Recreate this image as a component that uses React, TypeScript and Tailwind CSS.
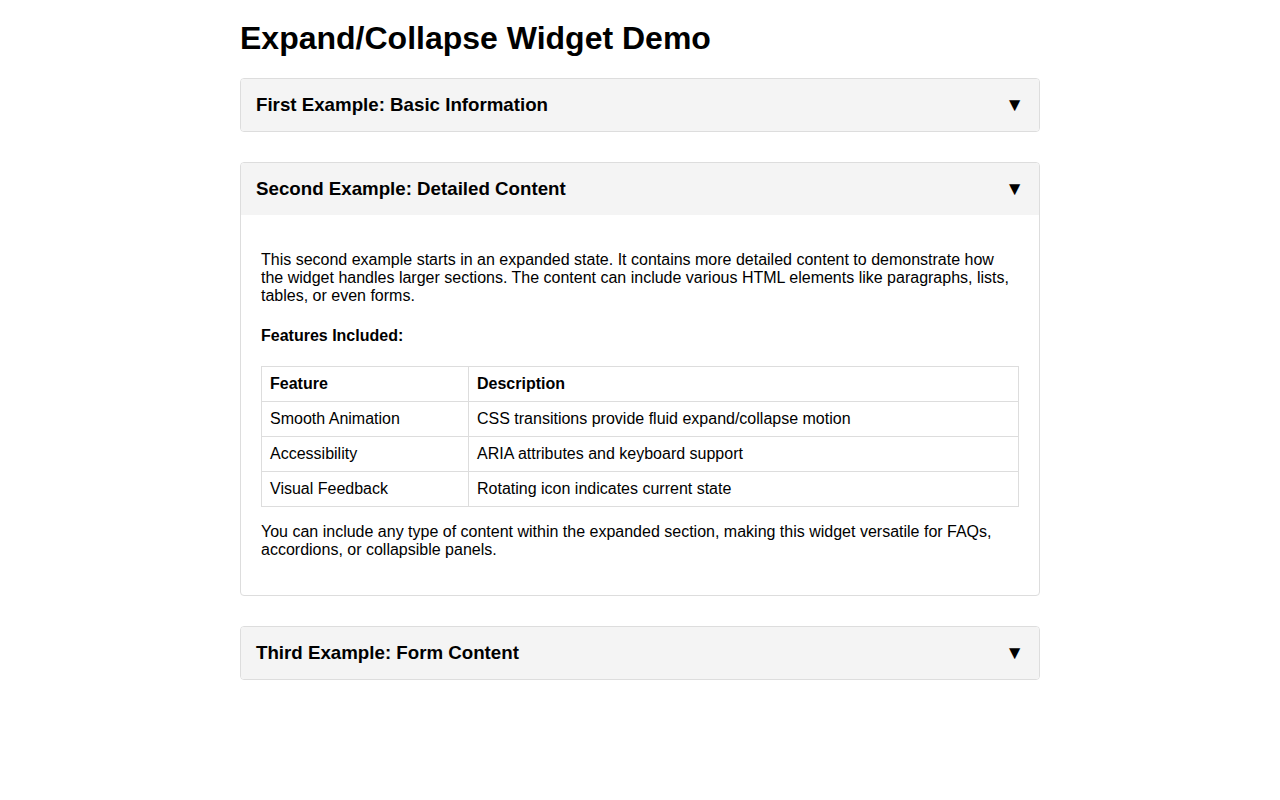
import React, { useState } from "react";

type Section = {
  id: number;
  title: string;
};

const rows = [
  ["Smooth Animation", "CSS transitions provide fluid expand/collapse motion"],
  ["Accessibility", "ARIA attributes and keyboard support"],
  ["Visual Feedback", "Rotating icon indicates current state"],
];

function Panel({
  title,
  open,
  onToggle,
  children,
}: {
  title: string;
  open: boolean;
  onToggle: () => void;
  children?: React.ReactNode;
}) {
  return (
    <div className="mb-[30px] border border-[#dddddd] rounded-[4px] overflow-hidden">
      <div
        role="button"
        aria-expanded={open}
        onClick={onToggle}
        className="flex items-center justify-between bg-[#f4f4f4] px-[15px] py-[15px] cursor-pointer"
      >
        <h3 className="text-[18.72px] leading-[22px] font-bold">{title}</h3>
        <span className="text-[19px] leading-[22px]">▼</span>
      </div>
      {open && <div className="px-5 py-5">{children}</div>}
    </div>
  );
}

export default function App() {
  const [open, setOpen] = useState<Record<number, boolean>>({ 1: false, 2: true, 3: false });
  const sections: Section[] = [
    { id: 1, title: "First Example: Basic Information" },
    { id: 2, title: "Second Example: Detailed Content" },
    { id: 3, title: "Third Example: Form Content" },
  ];

  const toggle = (id: number) => setOpen((o) => ({ ...o, [id]: !o[id] }));

  return (
    <div className="min-h-[800px] bg-white text-black font-['Liberation_Sans',Arial,sans-serif]">
      <div className="max-w-[800px] mx-auto pt-[20px]">
        <h1 className="text-[32px] leading-[37px] font-bold mb-[21px]">Expand/Collapse Widget Demo</h1>

        {sections.map((s) => (
          <Panel key={s.id} title={s.title} open={open[s.id]} onToggle={() => toggle(s.id)}>
            {s.id === 2 && (
              <div className="text-[16px] leading-[18px]">
                <p className="my-4">
                  This second example starts in an expanded state. It contains more detailed content to
                  demonstrate how the widget handles larger sections. The content can include various HTML
                  elements like paragraphs, lists, tables, or even forms.
                </p>
                <h4 className="font-bold mt-[22px] mb-[21px]">Features Included:</h4>
                <table className="w-full border-collapse">
                  <thead>
                    <tr>
                      <th className="w-[207px] border border-[#dddddd] px-2 py-2 text-left font-bold">Feature</th>
                      <th className="border border-[#dddddd] px-2 py-2 text-left font-bold">Description</th>
                    </tr>
                  </thead>
                  <tbody>
                    {rows.map((r) => (
                      <tr key={r[0]}>
                        <td className="border border-[#dddddd] px-2 py-2">{r[0]}</td>
                        <td className="border border-[#dddddd] px-2 py-2">{r[1]}</td>
                      </tr>
                    ))}
                  </tbody>
                </table>
                <p className="my-4">
                  You can include any type of content within the expanded section, making this widget versatile
                  for FAQs, accordions, or collapsible panels.
                </p>
              </div>
            )}
          </Panel>
        ))}
      </div>
    </div>
  );
}
